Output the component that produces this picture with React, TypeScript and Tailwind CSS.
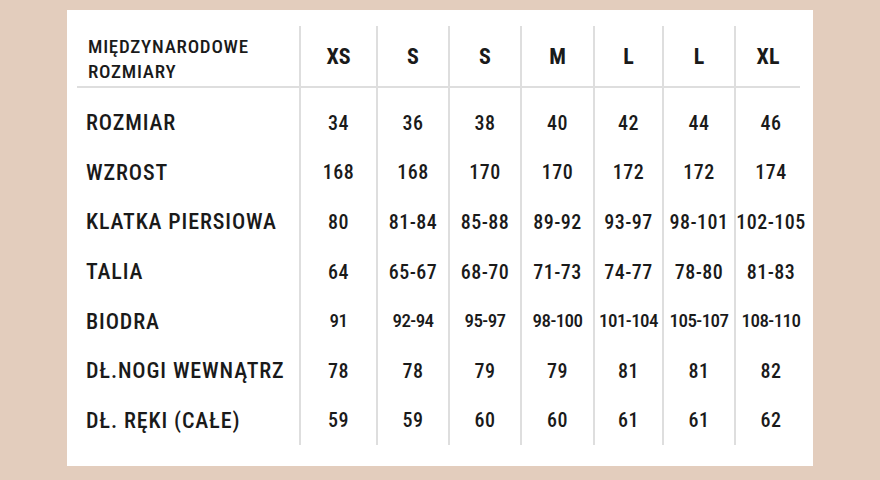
const sizes = ["XS", "S", "S", "M", "L", "L", "XL"];
const widths = ["w-[77px]", "w-[72px]", "w-[72px]", "w-[73px]", "w-[69px]", "w-[72px]", "w-[66px]"];

const labels = [
  "ROZMIAR",
  "WZROST",
  "KLATKA PIERSIOWA",
  "TALIA",
  "BIODRA",
  "DŁ.NOGI WEWNĄTRZ",
  "DŁ. RĘKI (CAŁE)",
];

const data = [
  ["34", "36", "38", "40", "42", "44", "46"],
  ["168", "168", "170", "170", "172", "172", "174"],
  ["80", "81-84", "85-88", "89-92", "93-97", "98-101", "102-105"],
  ["64", "65-67", "68-70", "71-73", "74-77", "78-80", "81-83"],
  ["91", "92-94", "95-97", "98-100", "101-104", "105-107", "108-110"],
  ["78", "78", "79", "79", "81", "81", "82"],
  ["59", "59", "60", "60", "61", "61", "62"],
];

export default function App() {
  return (
    <div className="w-[880px] h-[480px] bg-[#e3cdbd] pt-[10px] pl-[67px] font-['Roboto',sans-serif] text-[#1a1a1a]">
      <div className="w-[746px] h-[456px] bg-white pt-[16px] pl-[10px]">
        <div className="flex">
          {/* label column */}
          <div className="w-[222px]">
            <div className="h-[62px] border-b-2 border-[#dedede] pl-[11px] flex flex-col justify-center text-[19px] leading-[25px] font-medium [font-stretch:75%] tracking-[0.04em] pt-[5px]">
              <span>MIĘDZYNARODOWE</span>
              <span>ROZMIARY</span>
            </div>
            <div className="h-[10px]" />
            {labels.map((l) => (
              <div key={l} className="h-[49.6px] flex items-center pl-[9px] text-[22px] font-medium [font-stretch:75%] tracking-[0.04em] whitespace-nowrap">
                {l}
              </div>
            ))}
          </div>
          {sizes.map((s, c) => (
            <div key={c} className={`${widths[c]} border-l-2 border-[#dedede]`}>
              <div className="h-[62px] border-b-2 border-[#dedede] flex items-center justify-center text-[22px] font-bold [font-stretch:75%]">
                {s}
              </div>
              <div className="h-[10px]" />
              {data.map((row, r) => (
                <div
                  key={r}
                  className={
                    (c === 6 ? "pl-[6px] " : "") +
                    (r === 4
                      ? "h-[49.6px] flex items-center justify-center text-[19px] font-medium [font-stretch:75%] tracking-[-0.03em] whitespace-nowrap"
                      : "h-[49.6px] flex items-center justify-center text-[20px] font-medium [font-stretch:75%] tracking-[0.025em] whitespace-nowrap")
                  }
                >
                  {row[c]}
                </div>
              ))}
            </div>
          ))}
        </div>
      </div>
    </div>
  );
}
